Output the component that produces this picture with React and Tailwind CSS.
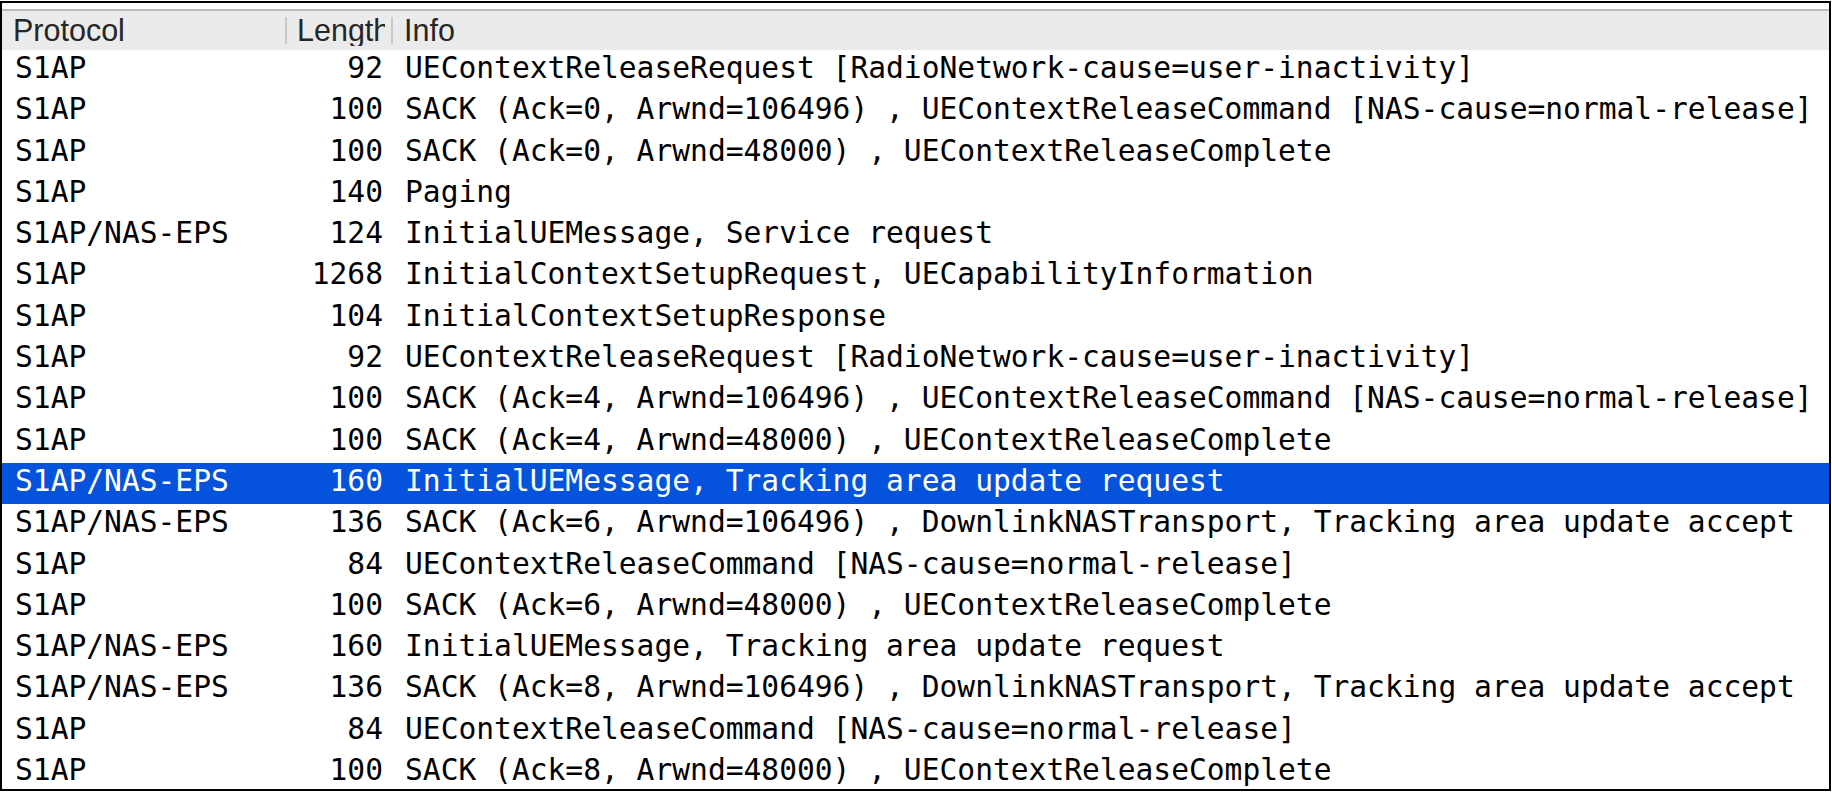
const rows = [
  ["S1AP", "92", "UEContextReleaseRequest [RadioNetwork-cause=user-inactivity]"],
  ["S1AP", "100", "SACK (Ack=0, Arwnd=106496) , UEContextReleaseCommand [NAS-cause=normal-release]"],
  ["S1AP", "100", "SACK (Ack=0, Arwnd=48000) , UEContextReleaseComplete"],
  ["S1AP", "140", "Paging"],
  ["S1AP/NAS-EPS", "124", "InitialUEMessage, Service request"],
  ["S1AP", "1268", "InitialContextSetupRequest, UECapabilityInformation"],
  ["S1AP", "104", "InitialContextSetupResponse"],
  ["S1AP", "92", "UEContextReleaseRequest [RadioNetwork-cause=user-inactivity]"],
  ["S1AP", "100", "SACK (Ack=4, Arwnd=106496) , UEContextReleaseCommand [NAS-cause=normal-release]"],
  ["S1AP", "100", "SACK (Ack=4, Arwnd=48000) , UEContextReleaseComplete"],
  ["S1AP/NAS-EPS", "160", "InitialUEMessage, Tracking area update request", true],
  ["S1AP/NAS-EPS", "136", "SACK (Ack=6, Arwnd=106496) , DownlinkNASTransport, Tracking area update accept"],
  ["S1AP", "84", "UEContextReleaseCommand [NAS-cause=normal-release]"],
  ["S1AP", "100", "SACK (Ack=6, Arwnd=48000) , UEContextReleaseComplete"],
  ["S1AP/NAS-EPS", "160", "InitialUEMessage, Tracking area update request"],
  ["S1AP/NAS-EPS", "136", "SACK (Ack=8, Arwnd=106496) , DownlinkNASTransport, Tracking area update accept"],
  ["S1AP", "84", "UEContextReleaseCommand [NAS-cause=normal-release]"],
  ["S1AP", "100", "SACK (Ack=8, Arwnd=48000) , UEContextReleaseComplete"],
];

function HeaderSep() {
  return <div className="w-[2px] h-[27px] bg-[#c9c9c9] shrink-0" />;
}

export default function App() {
  return (
    <div className="w-[1832px] h-[793px] bg-white pt-px">
      <div className="w-[1831px] h-[790px] border-2 border-black overflow-hidden flex flex-col">
        <div className="h-[6px] bg-white shrink-0" />
        <div className="h-[2px] bg-[#bcbcbc] shrink-0" />
        <div
          className="h-[39px] bg-[#ebebeb] flex items-center shrink-0 text-[#262626] text-[30.5px] leading-none"
          style={{ fontFamily: '"Liberation Sans", Arial, sans-serif' }}
        >
          <div className="w-[283px] pl-[11px] shrink-0">Protocol</div>
          <HeaderSep />
          <div className="w-[98px] pl-[10px] overflow-hidden whitespace-nowrap shrink-0">Length</div>
          <div className="w-[6px] shrink-0" />
          <HeaderSep />
          <div className="pl-[11px]">Info</div>
        </div>
        <div
          className="flex flex-col text-[29.6px] leading-none"
          style={{ fontFamily: '"DejaVu Sans Mono", Menlo, monospace' }}
        >
          {rows.map((r, i) => (
            <div
              key={i}
              className={
                "h-[41.3px] shrink-0 flex items-start pt-[4px] whitespace-pre " +
                (r[3] ? "bg-[#0553dc] text-white" : "text-black")
              }
            >
              <div className="w-[285px] pl-[13px] shrink-0">{r[0]}</div>
              <div className="w-[96px] text-right shrink-0">{r[1]}</div>
              <div className="pl-[22px]">{r[2]}</div>
            </div>
          ))}
        </div>
      </div>
    </div>
  );
}
